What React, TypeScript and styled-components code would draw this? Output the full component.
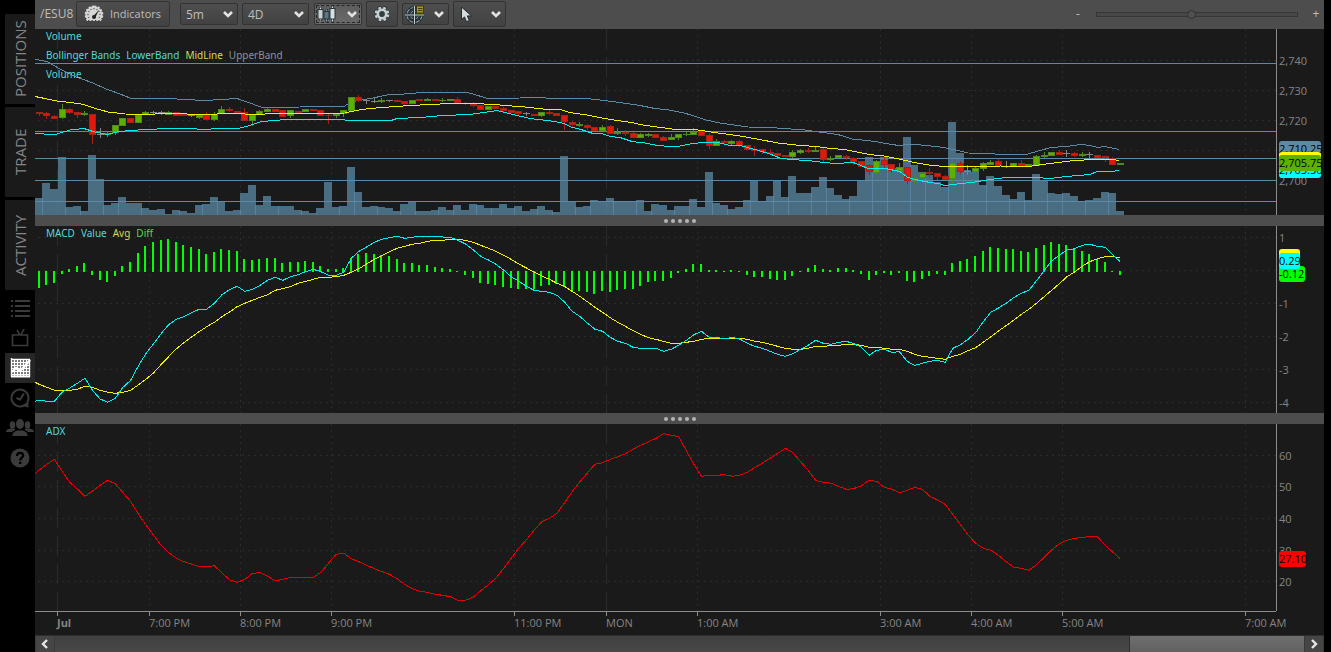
import React from 'react';
import styled, { createGlobalStyle } from 'styled-components';

const uiFont = '"Open Sans", "Noto Sans", sans-serif';
const labelFont = '"Noto Sans", "Open Sans", sans-serif';

const palette = {
  plot: '#1a1a1a',
  frame: '#4d4d4d',
  gridLine: '#2b2b2b',
  axis: '#8c8c8c',
  axisText: '#858585',
  steel: '#5c8aa6',
  yellow: '#f2f200',
  cyan: '#00f0f0',
  lime: '#00ff00',
  red: '#e60000',
  up: '#5cb000',
  upEdge: '#4d8a20',
  down: '#e01a0a',
  downEdge: '#a82016',
};

/* ---------- market data ---------- */

// Every plot is drawn in a space 1241 units wide; one bar every 7.613 units.
const PLOT_W = 1241;
const barX = (i: number) => 4.2 + i * 7.613;
const cellX = (i: number) => Math.floor(barX(i));

type Tick = { x: number; text: string; day?: boolean };
const ticks: Tick[] = [
  { x: 22, text: 'Jul', day: true },
  { x: 114, text: '7:00 PM' },
  { x: 205, text: '8:00 PM' },
  { x: 296, text: '9:00 PM' },
  { x: 479, text: '11:00 PM' },
  { x: 571, text: 'MON', day: true },
  { x: 662, text: '1:00 AM' },
  { x: 845, text: '3:00 AM' },
  { x: 936, text: '4:00 AM' },
  { x: 1027, text: '5:00 AM' },
  { x: 1210, text: '7:00 AM' },
];

// kind (g up, r down, x doji), high, body top, body bottom, low
const candleText = `
r 112 112 114 116;r 112 113 116 119;r 115 116 119 119;g 104 109 118 119;r 108 109 113 114;r 112 112 115 118;g 111 113 115 116;
r 114 114 135 144;x 128 134 135 138;g 132 133 135 137;g 125 125 133 135;g 118 118 126 126;r 118 118 123 123;g 114 115 123 123;
g 111 112 115 115;x 111 112 113 115;x 111 112 113 115;g 111 112 115 115;r 112 112 116 116;r 114 114 116 116;x 114 115 116 117;
g 114 115 118 119;r 112 115 120 120;g 112 114 120 121;g 106 109 114 114;r 107 109 111 112;r 111 111 113 113;r 108 112 121 121;
g 114 115 121 126;g 110 111 115 115;g 107 109 112 112;r 109 109 112 112;r 110 110 117 117;g 110 110 116 118;r 111 111 113 113;
g 109 109 112 112;r 109 109 111 111;r 110 110 116 116;r 113 115 116 124;g 113 114 116 118;g 110 110 114 117;g 97 97 111 111;
r 95 97 101 102;x 99 100 101 104;x 98 101 102 103;g 98 100 102 103;x 100 100 101 102;r 100 100 102 102;r 101 101 104 105;
g 100 100 104 104;r 99 99 101 101;g 98 99 101 101;r 99 99 101 101;g 98 100 101 102;g 99 99 101 101;r 97 99 103 103;
r 102 103 104 105;r 102 104 106 107;r 105 105 110 110;g 106 106 110 110;r 106 106 109 109;r 107 108 111 113;r 110 110 113 113;
r 111 111 114 115;x 112 113 114 116;r 114 114 116 116;g 112 112 116 117;r 110 112 114 115;r 113 113 116 116;r 115 115 122 130;
r 121 122 125 127;g 122 124 126 127;r 124 125 128 130;r 127 127 131 131;g 125 127 131 131;r 125 126 134 134;g 128 132 134 135;
r 130 132 134 136;r 132 133 138 138;g 133 134 138 138;g 133 134 136 137;r 134 134 138 138;r 136 137 141 141;g 134 137 140 140;
g 134 134 138 140;g 132 134 135 136;g 128 132 135 135;r 131 131 136 136;r 133 135 146 149;g 139 141 146 146;r 140 141 143 144;
g 140 141 144 145;r 140 141 146 147;r 145 145 150 150;r 146 149 151 156;r 149 149 152 154;r 149 152 154 155;r 153 153 156 158;
r 155 155 157 157;g 150 152 157 158;g 149 150 153 154;r 148 150 152 153;g 147 150 152 152;r 148 149 160 162;g 156 158 160 161;
g 155 155 158 158;r 155 156 158 160;r 157 158 162 165;r 161 161 167 167;r 164 165 172 175;g 160 161 173 174;r 157 160 165 168;
r 164 164 171 173;g 163 167 171 171;r 167 167 181 184;g 175 178 180 183;g 172 173 178 179;r 168 172 174 177;r 173 173 177 180;
r 175 176 180 180;g 161 163 179 183;r 161 163 172 174;x 165 171 172 175;g 166 168 172 174;g 162 163 169 171;g 160 162 165 165;
r 159 161 166 166;x 161 166 167 168;g 163 163 167 167;r 160 163 166 167;g 164 164 166 166;g 155 156 166 166;g 152 155 157 158;
g 152 152 156 156;r 150 152 155 155;x 150 153 154 157;r 152 153 156 157;g 152 154 156 157;x 152 154 155 158;r 155 155 158 158;
r 156 156 158 162;r 157 158 165 165;g 163 163 165 165`;
const candles = candleText
  .replace(/\n/g, '')
  .split(';')
  .map((row) => {
    const [kind, ...n] = row.trim().split(' ');
    const [high, top, bottom, low] = n.map(Number);
    return { kind, high, top, bottom, low };
  });

const toNumbers = (text: string) => text.trim().split(/\s+/).map(Number);

const volume = toNumbers(`
594 549 567 471 621 618 633 465 537 615 609 591 609 609 624 630 627 642 630 633 639 615 612 591 604 633 630 579 555 615
588 618 618 618 630 633 639 624 546 621 618 501 576 621 618 621 624 633 612 604 633 633 630 621 630 615 630 612 615 624
624 612 624 618 633 627 618 630 636 468 604 621 618 600 604 594 604 604 604 600 633 612 615 630 618 618 597 621 516 609
615 627 621 600 543 604 588 543 591 528 579 579 561 531 564 585 597 588 541 471 498 471 504 504 411 495 516 525 546 561
366 459 510 516 555 528 558 585 597 576 600 522 543 579 582 579 588 604 600 594 576 579 633`);

const macdDiff = toNumbers(`
324 315 309 282 267 258 249 285 300 306 288 258 246 219 198 186 180 177 186 195 201 207 222 216 207 210 213 237 240 237
234 234 249 246 246 243 246 258 267 267 264 234 222 219 222 225 228 237 249 249 255 255 261 264 267 276 285 294 309 312
315 321 324 327 327 327 318 315 312 321 333 333 336 342 333 336 330 327 327 318 306 303 303 294 279 267 252 252 270 270
276 270 276 285 291 291 297 300 300 288 276 264 255 267 270 264 264 270 282 300 285 279 285 279 303 306 297 288 282 285
249 243 237 228 213 201 204 207 207 213 216 204 195 186 192 195 204 213 222 237 246 276 285`);

const macdValue = toNumbers(`
661 664 664 637 624 610 595 631 657 667 655 622 601 559 521 492 461 434 418 410 398 388 388 370 344 329 319 334 328 316
301 292 301 290 284 275 268 275 286 286 277 235 214 201 187 178 173 169 175 172 169 169 169 171 172 181 192 209 229 240
253 270 290 304 319 331 334 337 346 366 394 409 429 448 454 472 484 490 502 505 505 505 514 508 496 481 464 454 472 472
477 472 477 490 499 505 514 523 529 521 508 496 481 490 493 487 484 491 502 526 511 508 517 515 544 556 550 544 541 547
505 494 478 458 425 397 384 370 353 340 331 302 272 242 226 210 206 196 193 199 202 224 245`);

const macdAvg = toNumbers(`
613 622 631 631 631 628 619 622 631 637 640 637 631 615 598 579 554 530 507 488 471 455 440 427 410 396 380 370 361 352
344 331 326 320 310 304 298 292 292 290 286 277 266 252 238 227 215 205 199 193 190 184 181 181 178 178 181 187 196 205
214 226 238 252 264 276 288 298 310 319 334 349 365 382 397 413 427 439 452 463 473 478 484 490 490 487 484 478 475 475
476 475 475 478 484 487 493 499 505 508 508 505 499 499 497 496 493 493 496 502 502 505 508 508 514 523 529 532 535 538
529 523 512 503 487 470 453 437 420 403 388 370 350 331 311 290 276 259 245 236 230 230 233`);

const adx = toNumbers(`
138 121 106 142 175 195 217 201 184 169 179 206 233 269 303 333 363 386 402 413 421 428 428 425 447 467 475 466 448 446
457 470 466 460 460 460 460 445 418 391 388 404 413 424 434 443 451 464 481 494 502 505 511 514 518 529 529 520 500 482
462 433 403 373 347 319 293 283 268 236 203 174 147 121 116 106 98 89 76 64 54 43 29 34 38 80 121 157 154 154
152 157 154 145 131 117 103 88 73 86 113 139 169 175 178 187 196 194 185 169 172 190 196 206 199 190 196 217 228 241
272 302 333 358 373 379 394 413 430 433 439 422 400 378 359 349 343 340 338 338 364 384 404`);

const upperBand =
  '35,59 48,62 60,69 75,76.5 93,83 105,88.5 120,94 130,98 150,99 168,98.5 185,99.5 205,100.5 222,99.5 237,98.5 247,102 261,107 280,107.5 300,107 344,106.5 350,102.5 356,101 373,98 389,94.5 404,94 428,92 466,92 476,95 488,98.5 520,98 538,97 550,98.5 587,98.5 612,101.5 640,105.5 655,108.5 669,110 686,113.5 706,120 720,123 748,127 770,127.5 805,130 823,132.5 838,134.5 852,139 876,141.5 885,143.5 899,145.5 912,144 940,147 954,149.5 968,153 990,153.5 1006,155 1028,154 1040,150.5 1051,147.5 1066,146.5 1081,144.5 1090,145.5 1098,147.5 1105,146.5 1119,149.5';
const midBand =
  '35,96.5 45,98.5 57,101 71,102.5 84,104.5 92,107.5 108,112 125,114 143,114.5 168,113.5 205,114.5 230,113.5 260,114.5 270,113.5 320,113.5 345,113 356,110.5 370,108.5 395,106.5 420,105 450,103.5 472,103.5 495,104.5 505,105.5 525,107 543,109 562,110 570,112.5 587,115 602,118 617,120.5 632,122.5 640,124.5 657,127 676,129.5 695,129.5 714,132.5 737,135.5 757,139 778,143 796,145 816,146.5 831,148.5 845,149.5 869,154.5 884,156 899,159 914,162.5 929,165 944,166.5 960,166.5 982,167 1000,166 1028,166.5 1050,163.5 1074,160.5 1095,159.5 1112,159.5 1119,160.5';
const lowerBand =
  '35,133 48,134.5 55,134.5 70,130 84,128.5 93,131.5 107,134.5 117,132 125,131 145,129.5 170,128.5 190,128.5 203,129.5 220,128.5 238,128.5 250,125.5 260,122 272,120.5 288,119.5 340,119.5 350,120.5 391,120.5 397,118.5 420,117.5 443,115.5 470,114.5 480,113 497,110.5 515,115 530,118.5 555,121.5 564,123.5 571,127 581,129.5 593,133.5 602,133.5 610,136.5 620,137.5 632,141.5 645,143 658,145.5 670,146.5 680,146 692,143.5 705,142.5 718,142.5 728,145 740,145.5 757,150 770,154 780,158 790,159.5 808,160.5 820,162 835,163.5 853,162.5 860,165 868,168.5 885,168.5 900,171.5 907,177 915,179.5 930,182.5 938,183.5 945,185.5 953,184.5 975,182 990,179.5 1006,177.5 1036,177.5 1050,178.5 1066,176.5 1090,174.5 1097,171.5 1112,171.5 1119,170.5';

const series = (values: number[], edge: number, shift: number) =>
  `0,${edge / 3 - shift} ` + values.map((v, i) => `${barX(i).toFixed(1)},${(v / 3 - shift).toFixed(1)}`).join(' ');

/* ---------- styles ---------- */

const GlobalStyle = createGlobalStyle`
  *, *::before, *::after { box-sizing: border-box; }
  body { margin: 0; background: #000; font-family: ${uiFont}; font-size: 11px; color: #bdbdbd; }
  button, select, input { font: inherit; color: inherit; margin: 0; }
`;

const Page = styled.div`
  display: grid;
  grid-template-columns: 35px minmax(0, 1fr);
  min-height: 100vh;
  padding-right: 7px;
`;

const Sidebar = styled.nav`
  display: flex;
  flex-direction: column;
  gap: 3px;
  padding: 14px 0 0 5px;
`;

const SideTab = styled.button`
  height: 90px;
  padding: 0;
  border: 0;
  background: ${palette.plot};
  color: #858585;
  font-size: 15px;
  line-height: 30px;
  writing-mode: vertical-rl;
  transform: rotate(180deg);
  text-align: center;
`;

const IconList = styled.div`
  display: flex;
  flex-direction: column;
`;

const SideIcon = styled.button<{ $active?: boolean }>`
  display: grid;
  place-items: center;
  height: 30px;
  padding: 0;
  border: 0;
  background: ${(p) => (p.$active ? '#262626' : 'transparent')};
  color: ${(p) => (p.$active ? '#fff' : '#3b3b3b')};
`;

const Workspace = styled.main`
  display: grid;
  grid-template-rows:
    29px minmax(120px, 186fr) 11px minmax(120px, 187fr) 11px minmax(120px, 187fr)
    24px 17px;
  background: ${palette.plot};
`;

const Toolbar = styled.header`
  display: flex;
  align-items: center;
  gap: 4px;
  padding: 0 4px 1px 5px;
  background: ${palette.frame};
`;

const Symbol = styled.span`
  width: 32px;
  font-size: 12px;
  line-height: 16px;
`;

const ToolButton = styled.button<{ $w: number; $tall?: boolean; $on?: boolean; $pad?: number }>`
  display: flex;
  align-items: center;
  justify-content: space-between;
  flex: none;
  width: ${(p) => p.$w}px;
  height: ${(p) => (p.$tall ? 26 : 22)}px;
  padding: 0 4px 0 ${(p) => p.$pad ?? 2}px;
  border: 1px solid #333;
  border-radius: 2px;
  outline: ${(p) => (p.$on ? '1px dashed #262626' : 'none')};
  outline-offset: -3px;
  background: ${(p) => (p.$on ? 'linear-gradient(#5c5c5c, #6a6a6a)' : 'linear-gradient(#4e4e4e, #424242)')};
  line-height: 16px;
`;

const WideButton = styled(ToolButton)`
  padding: 0 8px 0 7px;
`;

const Group = styled.div`
  display: flex;
  align-items: center;
  gap: 4px;
  margin: 0 1px 0 6px;
`;

const SelectBox = styled.label<{ $w: number }>`
  position: relative;
  width: ${(p) => p.$w}px;
  svg {
    position: absolute;
    right: 5px;
    top: 8px;
    pointer-events: none;
  }
`;

const Select = styled.select`
  display: block;
  width: 100%;
  height: 22px;
  padding: 0 5px;
  border: 1px solid #333;
  border-radius: 2px;
  background: linear-gradient(#4e4e4e, #424242);
  font-size: 12px;
  appearance: none;
`;

const Zoom = styled.div`
  display: flex;
  align-items: center;
  gap: 14px;
  margin-left: auto;
`;

const ZoomButton = styled.button`
  width: 8px;
  padding: 0;
  border: 0;
  background: none;
  font-size: 12px;
  line-height: 16px;
  text-align: center;
`;

const Slider = styled.input`
  width: 202px;
  height: 10px;
  background: transparent;
  appearance: none;
  &::-webkit-slider-runnable-track {
    height: 5px;
    border: 1px solid #363636;
    background: #484848;
  }
  &::-webkit-slider-thumb {
    appearance: none;
    width: 9px;
    height: 9px;
    margin-top: -3px;
    border: 1px solid #303030;
    border-radius: 50%;
    background: #505050;
  }
`;

const Panel = styled.section`
  position: relative;
  display: grid;
  grid-template-columns: minmax(0, 1fr) 48px;
  grid-template-rows: minmax(0, 1fr);
  min-height: 0;
`;

const Plot = styled.svg`
  display: block;
  width: 100%;
  height: 100%;
  min-height: 0;
`;

const AxisColumn = styled.svg`
  display: block;
  width: 48px;
  height: 100%;
  border-left: 1px solid ${palette.axis};
  font: 11px ${uiFont};
  overflow: hidden;
`;

const Legend = styled.div`
  position: absolute;
  inset: 0 auto auto 11px;
  display: flex;
  flex-direction: column;
  gap: 4px;
  font: 10px/15px ${labelFont};
`;

const LegendRow = styled.div`
  display: flex;
  gap: 6px;
`;

const LegendItem = styled.span<{ $tone: string }>`
  color: ${(p) => p.$tone};
`;

const Divider = styled.div`
  display: flex;
  align-items: center;
  justify-content: center;
  gap: 3px;
  background: ${palette.frame};
`;

const Dot = styled.i`
  width: 4px;
  height: 4px;
  border-radius: 50%;
  background: #b4b4b4;
`;

const TimeAxis = styled.svg`
  display: block;
  width: calc(100% - 48px);
  height: 24px;
  overflow: visible;
  font: 11px ${uiFont};
`;

const ScrollBar = styled.footer`
  display: flex;
  border-top: 1px solid #2e2e2e;
  padding: 0 1px;
  background: #3a3a3a;
`;

const ScrollButton = styled.button`
  display: grid;
  place-items: center;
  width: 18px;
  padding: 0;
  border: 0;
  background: #454545;
`;

const Track = styled.div`
  flex: 1;
  display: flex;
  justify-content: flex-end;
  margin: 0 1px;
  background: linear-gradient(#414141, #484848);
`;

const Thumb = styled.div`
  width: 14%;
  border-left: 1px solid #2e2e2e;
  background: linear-gradient(#6e6e6e, #616161);
`;

/* ---------- icons ---------- */

const Chevron = () => (
  <svg width="10" height="7" viewBox="0 0 10 7" fill="none" stroke="#e2e2e2" strokeWidth="2.6">
    <path d="M1 1l4 4 4-4" />
  </svg>
);

const GaugeIcon = () => (
  <svg width="20" height="18" viewBox="0 0 20 18">
    <path
      d="M10 1.5A8.2 8.2 0 0 0 3.6 15h12.8A8.2 8.2 0 0 0 10 1.5z"
      fill="#d6d6d6"
      stroke="#d6d6d6"
      strokeWidth="2"
      strokeDasharray="2 1.4"
    />
    <path d="M5 13a6 6 0 1 1 10 0" fill="none" stroke="#555" strokeWidth="1.2" strokeDasharray="1.2 1.8" />
    <path d="M9 11.5L15 4.8 11.4 12.6z" fill="#222" />
    <circle cx="10" cy="12" r="2" fill="#222" />
  </svg>
);

const CandlesIcon = () => (
  <svg width="20" height="18" viewBox="0 0 20 18">
    <path d="M3.500 2v14M15.500 1v16" stroke="#26343a" strokeWidth="3" />
    <path d="M9.500 4v13" stroke="#26343a" strokeWidth="3" />
    <path d="M3.500 2.500v13M15.500 1.500v15" stroke="#dfe6e8" strokeWidth="1.400" />
    <path d="M9.500 4.500v12" stroke="#8ba1a9" strokeWidth="1.400" />
    <g stroke="#26343a">
      <rect x="1" y="4.500" width="5" height="9.500" fill="#c9d2d5" />
      <rect x="7" y="6.500" width="5" height="7.500" fill="#5d7680" />
      <rect x="13" y="3.500" width="5" height="10.500" fill="#d8dfe1" />
    </g>
  </svg>
);

const GearIcon = () => (
  <svg width="18" height="18" viewBox="0 0 18 18">
    <circle cx="9" cy="9" r="6.3" fill="none" stroke="#2c373c" strokeWidth="3.8" strokeDasharray="3.6 1.35" />
    <circle cx="9" cy="9" r="6.3" fill="none" stroke="#c8d0d3" strokeWidth="2.2" strokeDasharray="2.6 2.35" strokeDashoffset="-.5" />
    <circle cx="9" cy="9" r="4.2" fill="#303c42" stroke="#c8d0d3" strokeWidth="2.6" />
  </svg>
);

const CrosshairIcon = () => (
  <svg width="20" height="19" viewBox="0 0 20 19" fill="none">
    <circle cx="9.5" cy="10" r="7.5" stroke="#1e2a30" strokeWidth="3" />
    <circle cx="9.5" cy="10" r="7.5" stroke="#8196a0" strokeWidth="1.2" strokeDasharray="5 1.2" />
    <circle cx="9.5" cy="10" r="4" stroke="#1e2a30" strokeWidth="2.400" />
    <circle cx="9.5" cy="10" r="4" stroke="#7d929b" />
    <path d="M9.5 1v18M0 10h19" stroke="#1e2a30" strokeWidth="2.4" />
    <path d="M9.5 1v18M0 10h19" stroke="#c5d0d4" />
    <path d="M11.5 1h7v7h-7z" fill="#a89c12" stroke="#3c3a10" />
    <path d="M13 3.5h4.5M13 5.5h4.5" stroke="#3c3a10" />
  </svg>
);

const CursorIcon = () => (
  <svg width="14" height="17" viewBox="0 0 14 17">
    <path d="M1.5 1v12.5l3-2.6 2 4.8 2.8-1.2-2-4.6h4.2z" fill="#d3dbde" stroke="#222b30" strokeLinejoin="round" />
  </svg>
);

const ListIcon = () => (
  <svg width="20" height="17" viewBox="0 0 20 17" fill="currentColor" shapeRendering="crispEdges">
    {[0, 5, 10, 15].map((y) => (
      <React.Fragment key={y}>
        <rect x="1" y={y} width="2" height="2" />
        <rect x="5" y={y} width="15" height="2" />
      </React.Fragment>
    ))}
  </svg>
);

const TvIcon = () => (
  <svg width="18" height="18" viewBox="0 0 18 18" fill="none" stroke="currentColor" strokeWidth="1.6">
    <path d="M1.500 6h15v10.500h-15zM9 6L6 1M10 6L13 0" />
  </svg>
);

const ChartIcon = () => (
  <svg width="22" height="20" viewBox="0 0 22 20" fill="none" stroke="currentColor" strokeWidth="1.4">
    <path d="M2.500 0v19M5.500 1v18M8.500 1v18M11.500 1v18M14.500 1v18M17.500 1v18M20.500 1v18M2 1.500h19M2 4.500h19M2 7.500h19M2 10.500h19M2 13.500h19M2 16.500h19" />
    <path d="M2 18.500h19" strokeWidth="2" />
    <path d="M3 14l4-4 4 3 4-4 6-7" strokeWidth="2.400" />
  </svg>
);

const ClockIcon = () => (
  <svg width="20" height="20" viewBox="0 0 20 20" fill="none" stroke="currentColor" strokeWidth="2">
    <path d="M14 17.500A8.500 8.500 0 1 1 18.500 10c0 1.500-.4 3-1.200 4.200" />
    <path d="M13 17.500l5 1.500v-5z" fill="currentColor" strokeWidth="1" />
    <path d="M6.500 10l3.500 1.500L14 5.500" />
  </svg>
);

const PeopleIcon = () => (
  <svg width="28" height="18" viewBox="0 0 28 18" fill="currentColor">
    <ellipse cx="14" cy="5" rx="4" ry="5" />
    <path d="M6.500 17c0-4 2-4.500 5-5.500h5c3 1 5 1.500 5 5.500z" />
    <ellipse cx="6.500" cy="6" rx="2.800" ry="3.800" />
    <path d="M0 13c0-2.500 2-3 4.500-3.500h4L9.500 11c-2 .6-3 1.200-3.600 2z" />
    <ellipse cx="21.500" cy="6" rx="2.800" ry="3.800" />
    <path d="M28 13c0-2.500-2-3-4.500-3.500h-4L18.500 11c2 .6 3 1.200 3.600 2z" />
  </svg>
);

const HelpIcon = () => (
  <svg width="20" height="20" viewBox="0 0 20 20">
    <circle cx="10" cy="10" r="9.500" fill="currentColor" />
    <path d="M7 8c0-4 6.200-4 6.200-.6 0 2.300-3 2.300-3 5" fill="none" stroke="#000" strokeWidth="2.200" />
    <rect x="9" y="13.800" width="2.400" height="2.200" fill="#000" />
  </svg>
);

const Arrow = ({ d }: { d: string }) => (
  <svg width="8" height="10" viewBox="0 0 8 10" fill="none" stroke="#e6e6e6" strokeWidth="2.400">
    <path d={d} />
  </svg>
);

/* ---------- chart parts ---------- */

const Grid = ({ rows, height }: { rows: number[]; height: number }) => (
  <g stroke={palette.gridLine} fill="none">
    {rows.map((y) => (
      <path key={y} d={`M3 ${y + 0.5}H${PLOT_W}`} strokeDasharray="2 4" />
    ))}
    {ticks.map((t) => (
      <path key={t.x} d={`M${t.x + 0.5} 0V${height}`} strokeDasharray={t.day ? '20 8' : '2 4'} />
    ))}
  </g>
);

type Tag = { y: number; w: number; fill: string; text?: string };

const Axis = ({ height, labels, tags }: { height: number; labels: [number, string][]; tags: Tag[] }) => (
  <AxisColumn>
    {labels.map(([y, text]) => (
      <text key={text} x="2" y={`${(y / height) * 100}%`} dy="4" fill={palette.axisText}>
        {text}
      </text>
    ))}
    {tags.map((tag) => (
      <svg key={tag.y} x="2" y={`${(tag.y / height) * 100}%`} width="46" height="16">
        <rect width={tag.w} height="16" rx="3" fill={tag.fill} />
        {tag.text && (
          <text y="12" fill="#000">
            {tag.text}
          </text>
        )}
      </svg>
    ))}
  </AxisColumn>
);

const Candles = () => (
  <g>
    {candles.map((c, i) => {
      const x = cellX(i);
      if (c.kind === 'x') {
        return <path key={i} d={`M${x - 3} ${c.top + 0.5}h7M${x + 0.5} ${c.high}V${c.low}`} stroke="#858585" />;
      }
      const edge = c.kind === 'g' ? palette.upEdge : palette.downEdge;
      const h = c.bottom - c.top;
      return (
        <g key={i}>
          <rect x={x} y={c.high} width="1" height={c.low - c.high} fill={edge} />
          <rect x={x - 3} y={c.top} width="7" height={h} fill={edge} />
          {h > 2 && (
            <rect x={x - 2} y={c.top + 1} width="5" height={h - 2} fill={c.kind === 'g' ? palette.up : palette.down} />
          )}
        </g>
      );
    })}
  </g>
);

const Handle = () => (
  <Divider>
    {[0, 1, 2, 3, 4].map((n) => (
      <Dot key={n} />
    ))}
  </Divider>
);

const tone = { cyan: '#58d6d6', yellow: '#d9d94f', slate: '#8295a3', green: '#4fd94f' };

export default function App() {
  return (
    <>
      <GlobalStyle />
      <Page>
        <Sidebar aria-label="Panels">
          <SideTab>POSITIONS</SideTab>
          <SideTab>TRADE</SideTab>
          <SideTab>ACTIVITY</SideTab>
          <IconList>
            <SideIcon aria-label="Watchlist"><ListIcon /></SideIcon>
            <SideIcon aria-label="Live TV"><TvIcon /></SideIcon>
            <SideIcon aria-label="Chart" $active><ChartIcon /></SideIcon>
            <SideIcon aria-label="History"><ClockIcon /></SideIcon>
            <SideIcon aria-label="Community"><PeopleIcon /></SideIcon>
            <SideIcon aria-label="Help"><HelpIcon /></SideIcon>
          </IconList>
        </Sidebar>

        <Workspace>
          <Toolbar>
            <Symbol>/ESU8</Symbol>
            <WideButton $w={94} $tall>
              <GaugeIcon />
              Indicators
            </WideButton>
            <Group>
              <SelectBox $w={58}>
                <Select aria-label="Interval"><option>5m</option></Select>
                <Chevron />
              </SelectBox>
              <SelectBox $w={67}>
                <Select aria-label="Range"><option>4D</option></Select>
                <Chevron />
              </SelectBox>
            </Group>
            <ToolButton $w={48} $on aria-label="Chart type">
              <CandlesIcon />
              <Chevron />
            </ToolButton>
            <ToolButton $w={32} $tall $pad={6} aria-label="Settings"><GearIcon /></ToolButton>
            <ToolButton $w={47} aria-label="Crosshair">
              <CrosshairIcon />
              <Chevron />
            </ToolButton>
            <ToolButton $w={53} $tall $pad={6} aria-label="Drawing tools">
              <CursorIcon />
              <Chevron />
            </ToolButton>
            <Zoom>
              <ZoomButton aria-label="Zoom out">-</ZoomButton>
              <Slider type="range" aria-label="Zoom" min={0} max={100} defaultValue={47} />
              <ZoomButton aria-label="Zoom in">+</ZoomButton>
            </Zoom>
          </Toolbar>

          <Panel>
            <Plot viewBox={`0 0 ${PLOT_W} 186`} preserveAspectRatio="none" shapeRendering="crispEdges">
              <Grid rows={[31, 61, 91, 121, 151]} height={186} />
              <g fill={palette.steel} fillOpacity=".75">
                {volume.map((v, i) => {
                  const top = Math.round(v / 3) - 29;
                  return <rect key={i} x={cellX(i) - 4} y={top} width="8" height={186 - top} />;
                })}
              </g>
              {[34, 102, 129, 151, 172].map((y) => (
                <path key={y} d={`M0 ${y + 0.5}H${PLOT_W}`} stroke={palette.steel} />
              ))}
              <g transform="translate(-35 -29)" fill="none">
                <polyline points={upperBand} stroke={palette.steel} />
                <g transform="translate(35 0)"><Candles /></g>
                <polyline points={midBand} stroke={palette.yellow} />
                <polyline points={lowerBand} stroke={palette.cyan} />
              </g>
            </Plot>
            <Axis
              height={186}
              labels={[[32, '2,740'], [62, '2,730'], [92, '2,720'], [152, '2,700']]}
              tags={[
                { y: 112, w: 42, fill: '#5c8aa6', text: '2,710.25' },
                { y: 133, w: 42, fill: '#00ffff', text: '2,703.50' },
                { y: 123, w: 42, fill: '#ffff00' },
                { y: 126, w: 42, fill: palette.up, text: '2,705.75' },
              ]}
            />
            <Legend>
              <LegendRow><LegendItem $tone={tone.cyan}>Volume</LegendItem></LegendRow>
              <LegendRow>
                <LegendItem $tone={tone.cyan}>Bollinger Bands</LegendItem>
                <LegendItem $tone={tone.cyan}>LowerBand</LegendItem>
                <LegendItem $tone={tone.yellow}>MidLine</LegendItem>
                <LegendItem $tone={tone.slate}>UpperBand</LegendItem>
              </LegendRow>
              <LegendRow><LegendItem $tone={tone.cyan}>Volume</LegendItem></LegendRow>
            </Legend>
          </Panel>

          <Handle />

          <Panel>
            <Plot viewBox={`0 0 ${PLOT_W} 187`} preserveAspectRatio="none" shapeRendering="crispEdges">
              <Grid rows={[11, 44, 77, 110, 143, 176]} height={187} />
              <g fill={palette.lime}>
                {macdDiff.map((v, i) => {
                  const y = Math.round(v / 3) - 46;
                  const top = Math.min(y, 45);
                  const bottom = y > 45 ? y : 46;
                  return <rect key={i} x={cellX(i) - 1} y={top} width="2" height={bottom - top} />;
                })}
              </g>
              <g fill="none">
                <polyline points={series(macdAvg, 607, 46)} stroke={palette.yellow} />
                <polyline points={series(macdValue, 664, 46)} stroke={palette.cyan} />
              </g>
            </Plot>
            <Axis
              height={187}
              labels={[[12, '1'], [78, '-1'], [111, '-2'], [144, '-3'], [177, '-4']]}
              tags={[
                { y: 40, w: 26, fill: palette.lime, text: '-0.12' },
                { y: 23, w: 21, fill: '#ffff00' },
                { y: 27, w: 21, fill: '#00ffff', text: '0.29' },
              ]}
            />
            <Legend>
              <LegendRow>
                <LegendItem $tone={tone.cyan}>MACD</LegendItem>
                <LegendItem $tone={tone.cyan}>Value</LegendItem>
                <LegendItem $tone={tone.yellow}>Avg</LegendItem>
                <LegendItem $tone={tone.green}>Diff</LegendItem>
              </LegendRow>
            </Legend>
          </Panel>

          <Handle />

          <Panel>
            <Plot viewBox={`0 0 ${PLOT_W} 187`} preserveAspectRatio="none" shapeRendering="crispEdges">
              <Grid rows={[31, 62, 94, 126, 157]} height={187} />
              <polyline points={series(adx, 150, 0)} fill="none" stroke={palette.red} />
            </Plot>
            <Axis
              height={187}
              labels={[[32, '60'], [63, '50'], [95, '40'], [127, '30'], [158, '20']]}
              tags={[{ y: 127, w: 27, fill: '#ff0000', text: '27.10' }]}
            />
            <Legend>
              <LegendRow><LegendItem $tone={tone.cyan}>ADX</LegendItem></LegendRow>
            </Legend>
          </Panel>

          <TimeAxis>
            <rect width="100%" height="1" fill={palette.axis} />
            {ticks.map((t) => (
              <svg key={t.x} x={`${(t.x / PLOT_W) * 100}%`} width="60" height="24" overflow="visible">
                <rect width="1" height="5" fill={palette.axis} />
                <text y="16" fill={palette.axisText} fontWeight={t.text === 'Jul' ? 700 : 400}>
                  {t.text}
                </text>
              </svg>
            ))}
          </TimeAxis>

          <ScrollBar>
            <ScrollButton aria-label="Scroll left"><Arrow d="M6 1L2 5l4 4" /></ScrollButton>
            <Track><Thumb /></Track>
            <ScrollButton aria-label="Scroll right"><Arrow d="M2 1l4 4-4 4" /></ScrollButton>
          </ScrollBar>
        </Workspace>
      </Page>
    </>
  );
}
